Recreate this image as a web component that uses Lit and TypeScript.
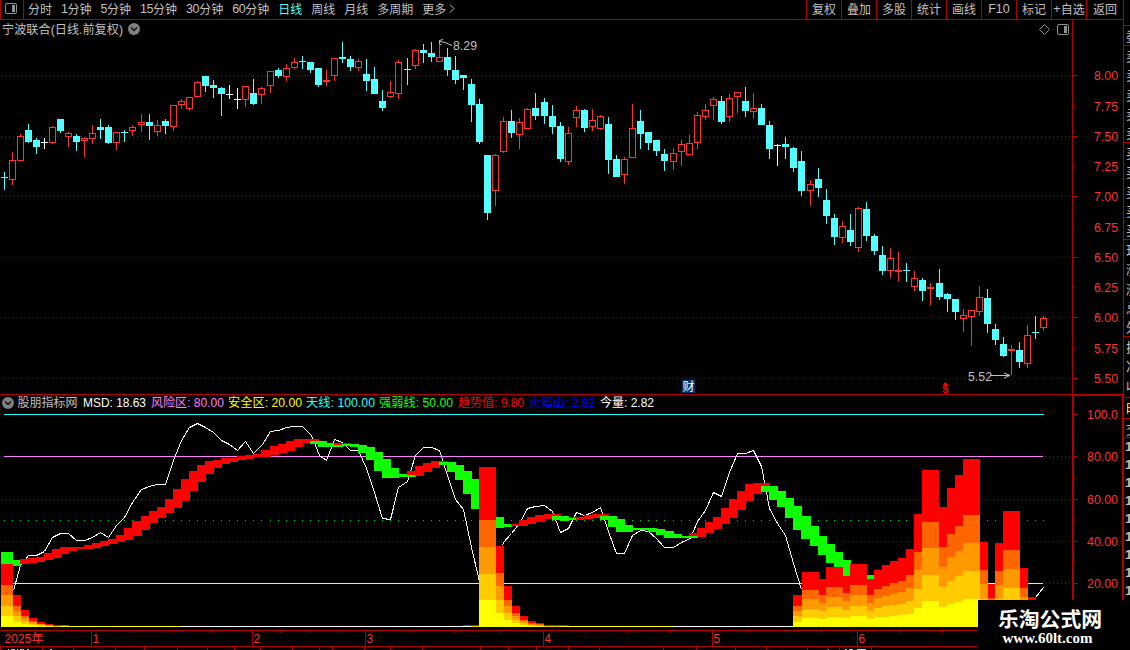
import { LitElement, html, svg, css } from "lit";
import { customElement, property } from "lit/decorators.js";
import { classMap } from "lit/directives/class-map.js";

type Kind = "d" | "u" | "w" | "f";
// kind, high, body top, body bottom, low
type Candle = [Kind, number, number, number, number];

const RAW = `d172,177,178,190|u152,160,180,185|u134,136,161,161|d124,130,142,143|d138,140,147,154|w138,142,143,149|u126,127,143,144|d119,119,131,133|u132,133,137,147|d134,136,142,151|u137,138,141,157|u125,133,139,144|d119,127,130,139|d125,127,143,144|u132,132,143,150|d130,132,133,142|u125,127,131,136|u114,122,125,132|d114,122,126,140|u120,125,132,136|d119,121,126,134|u105,105,127,131|u99,101,105,109|u97,97,109,111|u81,82,97,97|d76,76,86,92|d80,85,88,98|d87,88,94,116|w85,94,95,99|w88,99,100,109|u86,86,100,107|d79,93,104,105|u87,88,95,104|u71,71,86,93|d68,70,76,78|u64,68,77,81|u58,62,68,69|d56,61,62,69|d62,62,70,73|d68,68,85,87|f70,80,82,86|u58,58,76,81|d42,57,59,63|d56,59,67,71|u59,61,68,71|d59,74,81,91|d67,79,94,94|d90,101,108,111|u81,92,97,98|u60,62,94,99|d58,69,70,85|u49,50,66,69|d44,50,53,63|d42,53,57,62|u40,57,62,62|d48,57,70,76|d56,70,80,84|d75,75,78,90|d79,84,105,122|d99,104,142,144|d155,155,213,220|u154,155,191,206|u117,121,152,153|d110,121,133,138|u118,122,135,149|u108,109,129,129|d93,108,116,120|d98,102,116,124|d105,116,127,134|d122,126,159,162|u127,133,162,165|u106,110,118,127|d109,110,128,132|u109,120,127,131|u115,116,129,130|d117,124,160,174|d155,159,177,177|u157,159,175,184|u104,128,158,158|d110,121,134,149|d132,132,143,150|d140,140,151,156|d149,154,161,171|u148,153,162,170|u140,144,152,166|u135,143,155,155|u112,115,143,149|u104,110,117,120|u97,99,106,120|d96,101,122,124|u94,98,117,122|u92,92,97,113|d87,101,111,117|u93,108,112,119|d104,108,125,125|d121,125,149,159|w144,145,146,166|d137,144,147,159|d147,148,168,172|d151,161,191,196|u180,184,191,206|d168,179,188,197|d189,200,216,224|d214,218,237,245|u221,226,238,243|d214,230,242,246|u207,208,248,252|d202,209,236,241|d234,236,251,255|d246,255,271,275|u248,258,271,278|f252,270,272,281|d263,270,271,282|u271,278,287,291|d278,280,291,301|f283,287,289,305|d269,283,297,300|d293,294,299,312|d299,299,312,320|u309,315,319,332|u310,310,317,346|u286,297,312,316|d289,298,324,333|d324,329,340,345|d337,344,356,357|f345,349,351,375|d342,350,362,368|u325,335,364,368|d316,332,333,339|u316,318,328,331`;

const CANDLES: Candle[] = RAW.split("|").map((s) => {
  const n = s.slice(1).split(",").map(Number);
  return [s[0] as Kind, n[0], n[1], n[2], n[3]];
});

// Column centre of bar i; the pitch is slightly more than eight pixels.
const cx = (i: number) => 4 + 8 * i + Math.floor((i + 0.3) / 16.6);

// colour, bar index, top, bottom
const BANDS = `g1,560,566|r2,559,564|r3,558,563|r4,557,562|r5,553,560|r6,549,558|r7,547,554|r8,547,551|r9,547,549|r10,545,549|r11,543,548|r12,541,546|r13,539,544|r14,535,542|r15,528,540|r16,521,536|r17,516,530|r18,511,523|r19,507,518|r20,499,513|r21,489,508|r22,479,501|r23,471,491|r24,465,482|r25,461,474|r26,460,468|r27,458,464|r28,458,462|r29,456,460|r30,455,459|r31,454,457|r32,450,457|r33,446,455|r34,444,453|r35,441,451|r36,439,447|r37,439,443|r38,439,441|g38,441,444|g39,441,447|g40,443,447|r41,443,445|g41,445,447|r42,443,444|g42,444,446|g43,444,447|g44,445,453|g45,447,460|g46,452,471|g47,459,478|g48,468,478|g49,474,477|r50,471,475|g50,475,477|r51,466,476|r52,463,472|r53,461,468|r54,461,462|g54,462,465|g55,462,472|g56,465,480|g57,471,494|g58,479,509|g61,517,528|g62,524,527|r63,524,526|r64,520,526|r65,517,524|r66,515,522|r67,514,519|r68,514,516|g68,516,520|g69,516,521|r70,517,518|g70,518,520|r71,517,520|r72,515,519|r73,514,518|r74,514,516|g74,516,520|g75,516,527|g76,519,532|g77,525,532|g78,528,530|g79,528,530|g80,528,532|g81,529,535|g82,531,538|g83,534,538|g84,536,538|r85,533,536|g85,536,538|r86,528,537|r87,522,533|r88,517,529|r89,508,524|r90,499,518|r91,491,510|r92,484,501|r93,483,494|r94,483,486|g94,486,492|g95,486,500|g96,491,507|g97,498,518|g98,506,530|g99,516,539|g100,526,546|g101,536,555|g102,544,563|g103,552,567|g104,560,576|g107,575,579`
  .split("|")
  .map((s) => ({ up: s[0] === "r", v: s.slice(1).split(",").map(Number) }));

// left, right, top
const FLAMES = [
  [1, 13, 564], [13, 21, 595], [21, 29, 610], [29, 37, 618], [37, 45, 622], [45, 53, 624], [53, 61, 625],
  [471, 479, 625], [479, 496, 467], [496, 504, 546], [504, 512, 586], [512, 520, 606], [520, 528, 616],
  [528, 536, 621], [536, 544, 623], [544, 561, 625],
  [793, 802, 595], [802, 819, 572], [819, 826, 579], [826, 843, 567], [843, 850, 576], [850, 867, 564],
  [867, 874, 579], [874, 882, 570], [882, 890, 565], [890, 898, 561], [898, 906, 558], [906, 914, 549],
  [914, 922, 514], [922, 939, 470], [939, 947, 507], [947, 955, 488], [955, 963, 475], [963, 980, 459],
  [980, 988, 542], [988, 995, 584], [995, 1003, 543], [1003, 1020, 511], [1020, 1028, 568], [1028, 1036, 597],
];
const FLAME_BASE = 627;
const FLAME_LAYERS: [string, number][] = [
  ["#ff0000", 1], ["#ff6600", 2 / 3], ["#ff9900", 1 / 2], ["#ffcc00", 1 / 3], ["#ffff00", 1 / 6],
];

const MSD_LINES = [
  "13,590 20,565 25,559 28,555 36,555 44,551 52,537 60,533 68,533 76,540 84,540 92,537 100,532 108,537 116,525 124,517 132,502 141,489 149,486 156,484 165,484 173,460 181,440 189,427 197,423 205,427 213,432 221,440 229,444 237,450 245,441 253,453 262,444 270,431 278,430 286,427 294,426 302,426 311,435 319,455 326,460 334,439 342,442 350,450 358,450 366,468 374,492 382,518 390,519 398,487 407,481 415,455 423,447 431,447 439,450 447,475 455,499 463,509 471,547 479,581",
  "502,545 503,542 511,533 519,523 527,508 535,506 544,505 552,511 560,532 568,528 576,512 584,515 592,512 600,507 608,531 616,553 624,553 632,535 640,530 648,531 656,538 664,547 673,547 681,542 690,538 697,521 705,510 713,492 721,496 729,472 737,453 745,453 753,450 761,466 769,508 777,523 785,535 793,563 801,589",
  "1035,597 1043,587",
];

const panelIcon = (x: number, y: number) => svg`
  <rect x=${x + 0.5} y=${y + 0.5} width="11" height="10" rx="1.5" fill="none" stroke="#909090"></rect>
  <rect x=${x + 7} y=${y + 2} width="3" height="7" fill="#909090"></rect>`;

const chevronDot = (x: number, y: number) => svg`
  <circle cx=${x} cy=${y} r="6" fill="#808080"></circle>
  <path d="M${x - 3} ${y - 1.5}L${x} ${y + 1.5}L${x + 3} ${y - 1.5}" fill="none" stroke="#101010" stroke-width="1.4"></path>`;

const label = (x: number, y: number, w: number, fill: string, text: string, size = 12) => svg`
  <text x=${x} y=${y} textLength=${w} lengthAdjust="spacingAndGlyphs" fill=${fill} font-size=${size}>${text}</text>`;

const px = (x: number, y: number, w: number, h: number, fill: string) => svg`
  <rect x=${x} y=${y} width=${w} height=${h} fill=${fill} shape-rendering="crispEdges"></rect>`;

const dotted = (y: number) => svg`
  <path d="M1 ${y + 0.5}H1072" stroke="#b00000" stroke-dasharray="1 3" shape-rendering="crispEdges"></path>`;

const chartStyles = css`
  :host { display: block; }
  svg { display: block; }
  text { font-family: "Liberation Sans", "Noto Sans CJK SC", sans-serif; white-space: pre; }
`;

@customElement("period-toolbar")
class PeriodToolbar extends LitElement {
  static styles = css`
    :host {
      display: flex;
      box-sizing: border-box;
      height: 20px;
      border-bottom: 1px solid #b00000;
      color: #c0c0c0;
      font: 12px/18px "Noto Sans CJK SC", sans-serif;
      white-space: nowrap;
    }
    .toggle { box-sizing: border-box; width: 24px; border: solid #b00000; border-width: 0 1px; }
    .toggle svg { display: block; }
    .periods { display: flex; flex: 1; padding-left: 4px; gap: 9px; }
    .period { display: flex; }
    .num { font-family: "Liberation Sans", sans-serif; font-size: 12.5px; letter-spacing: -0.45px; }
    .on { color: #54ffff; }
    .tools { display: flex; }
    .tools .num { letter-spacing: 0; }
    .tool {
      box-sizing: border-box;
      display: flex;
      justify-content: center;
      width: 35px;
      border-left: 1px solid #b00000;
    }
    .last { width: 37px; }
    .more { display: block; margin-left: 2px; }
  `;
  render() {
    const periods = [["", "分时"], ["1", "分钟"], ["5", "分钟"], ["15", "分钟"], ["30", "分钟"], ["60", "分钟"],
      ["", "日线"], ["", "周线"], ["", "月线"], ["", "多周期"]];
    const tools = [["", "复权"], ["", "叠加"], ["", "多股"], ["", "统计"], ["", "画线"], ["F10", ""], ["", "标记"],
      ["+", "自选"], ["", "返回"]];
    return html`
      <div class="toggle"><svg width="22" height="19">${panelIcon(4, 3)}</svg></div>
      <div class="periods">
        ${periods.map(([n, t]) => html`<span class=${classMap({ period: true, on: t === "日线" })}
          ><span class="num">${n}</span><span>${t}</span></span>`)}
        <span class="period">更多<svg class="more" width="8" height="18"
          ><path d="M2 4.5L6 8.5L2 12.5" fill="none" stroke="#c0c0c0"></path></svg></span>
      </div>
      <div class="tools">
        ${tools.map(([n, t], i) => html`<span class=${classMap({ tool: true, last: i === 8 })}
          ><span class="num">${n}</span><span>${t}</span></span>`)}
      </div>`;
  }
}

@customElement("price-chart")
class PriceChart extends LitElement {
  static styles = chartStyles;
  private candle([k, hi, top, bot, lo]: Candle, i: number) {
    const x = cx(i);
    const color = k === "d" ? "#54ffff" : k === "w" ? "#ffffff" : "#ff3232";
    if (k !== "u") return svg`${px(x, hi, 1, lo - hi, color)}${px(x - 3, top, 7, bot - top, color)}`;
    return svg`
      ${top > hi ? px(x, hi, 1, top - hi, color) : ""}
      ${lo > bot ? px(x, bot, 1, lo - bot, color) : ""}
      <rect x=${x - 2.5} y=${top + 0.5} width="6" height=${bot - top - 1} fill="none" stroke=${color}
        shape-rendering="crispEdges"></rect>`;
  }
  render() {
    const scale: [string, number][] = [["8.00", 75], ["7.75", 106], ["7.50", 136], ["7.25", 166], ["7.00", 196],
      ["6.75", 227], ["6.50", 257], ["6.25", 287], ["6.00", 317], ["5.75", 348], ["5.50", 378]];
    return html`<svg width="1123" height="374" viewBox="0 20 1123 374">
      ${scale.filter((_, i) => i % 2 === 0).map(([, y]) => dotted(y))}
      ${scale.map(([t, y], i) => svg`${px(1073, y, i % 2 ? 2 : 5, 1, "#b00000")}${label(1094, y + 5, 24, "#ff3232", t, 12.5)}`)}
      ${px(1072, 20, 1, 374, "#b00000")}
      ${CANDLES.map((c, i) => this.candle(c, i))}
      ${label(2, 34, 121, "#c0c0c0", "宁波联合(日线.前复权)")}
      ${chevronDot(134, 29)}
      <path d="M1044.5 24.5L1049.5 29.5L1044.5 34.5L1039.5 29.5Z" fill="none" stroke="#909090"></path>
      ${panelIcon(1057, 24)}
      <path d="M439.5 41.5L445 42.5L452 45.5M443 39.5L439.5 40.5V44L441.5 45" fill="none" stroke="#c0c0c0"></path>
      ${label(453, 50, 24, "#c0c0c0", "8.29", 12.5)}
      ${label(968, 381, 24, "#c0c0c0", "5.52", 12.5)}
      <path d="M990 375.5H1010M1004 373L1010 375.5L1004 378" fill="none" stroke="#c0c0c0"></path>
      ${px(682, 380, 13, 13, "#003a70")}
      ${label(682.5, 391, 12, "#ffffff", "财")}
      <text x="942.3" y="393" fill="#ff0000" font-size="11" font-weight="bold">$</text>
      <path d="M942.5 385L945.5 382L948.5 385Z" fill="#ff0000"></path>
    </svg>`;
  }
}

@customElement("flame-chart")
class FlameChart extends LitElement {
  static styles = chartStyles;
  render() {
    const legend: [number, number, string, string][] = [
      [17.5, 60, "#c0c0c0", "股朋指标网"], [83, 63, "#ffffff", "MSD: 18.63"], [151, 73, "#ff80ff", "风险区: 80.00"],
      [228, 74, "#ffff00", "安全区: 20.00"], [306, 69, "#20ffff", "天线: 100.00"], [379, 74, "#10ff10", "强弱线: 50.00"],
      [458, 66, "#ff0000", "趋势值: 9.80"], [529, 66, "#0000ff", "火焰山: 2.82"], [600, 54, "#ffffff", "今量: 2.82"]];
    const scale: [string, number][] = [["100.0", 414], ["80.00", 456], ["60.00", 499], ["40.00", 541], ["20.00", 583]];
    const months: [string, number][] = [["1", 91], ["2", 252], ["3", 365], ["4", 543], ["5", 712], ["6", 857]];
    const ticks = [131, 172, 212, 280, 309, 337, 410, 454, 499, 585, 628, 670, 748, 785, 821, 899, 942];
    const lower = [42, 73, 115, 144, 177, 207, 234, 260, 292, 319, 332, 364, 390, 422, 480, 508, 536, 568, 599, 663,
      696, 735, 766, 807, 839, 871];
    return html`<svg width="1123" height="256" viewBox="0 394 1123 256">
      ${px(0, 394, 1073, 1, "#b00000")}
      ${scale.slice(1).map(([, y]) => dotted(y))}
      ${CANDLES.map((_, i) => px(cx(i), 520, 1, 1, "#00e000"))}
      ${px(4, 414, 1040, 1, "#20ffff")}
      ${px(4, 456, 1039, 1, "#ff80ff")}
      ${px(4, 583, 1039, 1, "#ffff00")}
      ${px(4, 626, 1039, 1, "#ffffff")}
      ${px(4, 626, 178, 1, "#ffff00")}
      ${px(479, 626, 194, 1, "#ffff00")}
      <g transform="translate(.5 .5)">
        ${MSD_LINES.map((p) => svg`<polyline points=${p} fill="none" stroke="#ffffff" shape-rendering="crispEdges"></polyline>`)}
      </g>
      ${px(1, 552, 12, 12, "#10ff00")}
      ${BANDS.map(({ up, v: [i, top, bot] }) => px(cx(i), top, cx(i + 1) + 1 - cx(i), bot - top, up ? "#ff0000" : "#10ff00"))}
      ${FLAMES.map(([l, r, top]) => FLAME_LAYERS.map(([color, part]) => {
        const h = Math.round((FLAME_BASE - top) * part);
        return px(l, FLAME_BASE - h, r - l, h, color);
      }))}
      ${px(61, 625, 8, 1, "#ff3300")}
      ${px(463, 625, 8, 1, "#ff0000")}
      ${px(561, 625, 8, 1, "#ff0000")}
      ${chevronDot(8, 403)}
      ${legend.map(([x, w, color, t]) => label(x, 407, w, color, t))}
      ${scale.map(([t, y]) => svg`${px(1074, y, 4, 1, "#b00000")}${label(1087, y + 5, 31, "#ff3232", t, 12.5)}`)}
      ${[435, 478, 520, 562].map((y) => px(1074, y, 1, 1, "#b00000"))}
      ${px(1072, 394, 51, 2, "#b00000")}
      ${px(1072, 394, 2, 236, "#b00000")}
      ${px(1122, 394, 1, 236, "#b00000")}
      ${px(0, 630, 1073, 1, "#b00000")}
      ${px(0, 646, 1073, 1, "#b00000")}
      ${ticks.map((x) => px(x, 631, 1, 2, "#b00000"))}
      ${lower.map((x) => px(x, 647, 1, 3, "#b00000"))}
      ${px(0, 647, 1, 3, "#b00000")}
      ${label(4.5, 643, 39, "#ff3232", "2025年")}
      ${months.map(([t, x]) => svg`${px(x, 631, 1, 15, "#b00000")}${label(x + 1.5, 643, 6.6, "#ff3232", t)}`)}
      ${[[8, 1], [11, 4], [17, 1], [20, 4], [27, 2], [50, 2], [828, 1]].map(([x, w]) => px(x, 649, w, 1, "#c0c0c0"))}
      ${[[845, 2], [849, 4], [857, 9]].map(([x, w]) => px(x, 649, w, 1, "#54ffff"))}
    </svg>`;
  }
}

@customElement("quote-strip")
class QuoteStrip extends LitElement {
  @property({ type: Number }) rows = 9;
  static styles = css`
    :host {
      display: grid;
      grid-template-rows: 25px 20px 97px 97px 97px 61px 21px 19px 1fr;
      box-sizing: border-box;
      width: 7px;
      height: 650px;
      overflow: hidden;
      border-left: 1px solid #b00000;
      color: #c0c0c0;
      font: 13px/19.3px "Noto Sans CJK SC", sans-serif;
    }
    .group { border-top: 1px solid #b00000; padding-left: 2px; width: 20px; }
    .clear { border-top: none; }
    .yellow { color: #ffff00; }
    .ticks { padding-left: 1px; font: bold 13px/18px "Liberation Sans", sans-serif; }
  `;
  render() {
    const groups = ["", "委", "卖卖卖卖卖", "买买买买买", "现涨涨总外", "换净收", "时", "交"];
    return html`
      ${groups.map((g, i) => html`<div class=${classMap({ group: true, clear: i === 0, yellow: i === 6 })}>
        ${[...g].map((c) => html`<div>${c}</div>`)}</div>`)}
      <div class="group ticks">${Array.from({ length: this.rows }, () => html`<div>1</div>`)}</div>`;
  }
}

@customElement("app-root")
class AppRoot extends LitElement {
  static styles = css`
    :host {
      position: relative;
      display: grid;
      grid-template-columns: 1123px 7px;
      width: 1130px;
      height: 650px;
      overflow: hidden;
      background: #000;
    }
    .brand {
      position: absolute;
      right: 0;
      bottom: 0;
      box-sizing: border-box;
      width: 152px;
      height: 50px;
      padding: 5px 8px 0 0;
      background: #000;
      color: #fff;
      text-align: center;
    }
    .name { font: bold 20.8px/26px "Noto Sans CJK SC", sans-serif; }
    .url { margin-right: 5px; font: bold 15px/15px "Liberation Serif", serif; }
  `;
  render() {
    return html`
      <main>
        <period-toolbar></period-toolbar>
        <price-chart></price-chart>
        <flame-chart></flame-chart>
      </main>
      <quote-strip></quote-strip>
      <div class="brand">
        <div class="name">乐淘公式网</div>
        <div class="url">www.60lt.com</div>
      </div>`;
  }
}
